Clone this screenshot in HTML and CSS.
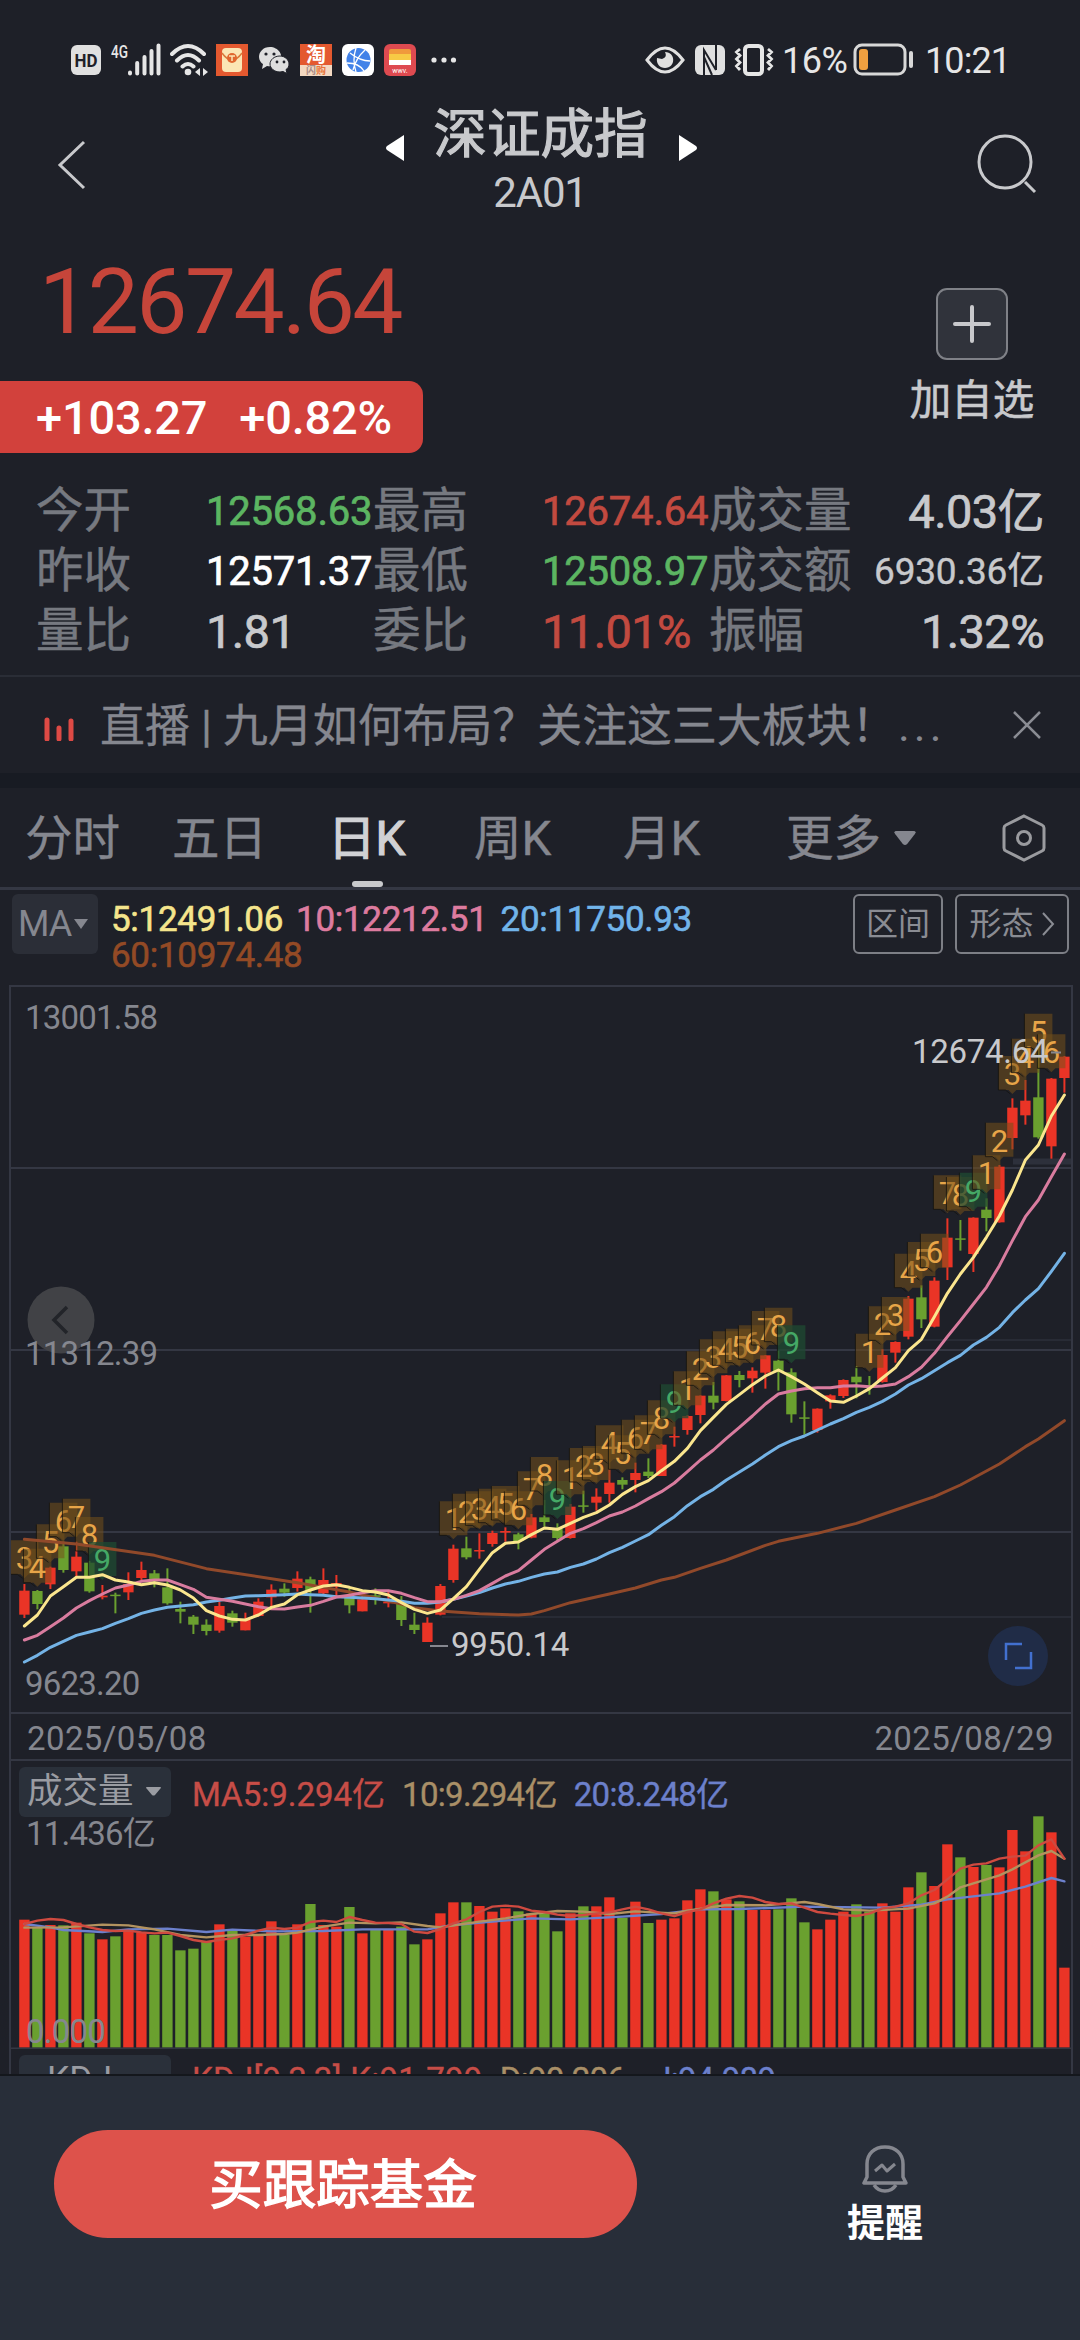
FILE: index.html
```html
<!DOCTYPE html>
<html lang="zh-CN">
<head>
  <meta charset="UTF-8" />
  <meta name="viewport" content="width=device-width, initial-scale=1" />
  <title>深证成指 2A01</title>
  <link rel="stylesheet" href="styles.css">
</head>
<body>
  <div class="page">
    <div class="status">
      <svg class="ic-hd" width="30" height="32" viewBox="0 0 30 32"><rect y="1" width="30" height="30" rx="6" fill="#e0e0e0"/><text x="15" y="23" textLength="23" lengthAdjust="spacingAndGlyphs" text-anchor="middle" font-size="19" font-weight="700" fill="#1e2028">HD</text></svg>
      <svg class="ic-signal" width="50" height="34" viewBox="0 0 50 34"><text x="0" y="15" textLength="17" lengthAdjust="spacingAndGlyphs" font-size="19" font-weight="500" fill="#e6e6e6">4G</text><path d="M19 29.500v1M26.200 20v10.500M33.500 14v16.500M40.500 8v22.500M47.500 2.500v28" stroke="#e6e6e6" stroke-width="4" stroke-linecap="round"/></svg>
      <svg class="ic-wifi" width="40" height="34" viewBox="0 0 40 34"><g fill="none" stroke="#e6e6e6" stroke-width="4" stroke-linecap="round"><path d="M2 11q16-16 32 0M7 17.500q11-11 22 0M12.500 23.500q5.500-5 11 0"/></g><circle cx="18" cy="29" r="3.300" fill="#e6e6e6"/><path d="M30 25v8l-5-4zM33 25v8l5-4z" fill="#e6e6e6"/></svg>
      <svg class="ic-app" width="32" height="32" viewBox="0 0 32 32"><rect width="32" height="32" fill="#e4592f"/><rect x="6" y="4" width="20" height="24" rx="4" fill="#fbe6b4"/><path d="M6 9q10 14 20 0" fill="none" stroke="#d9793a" stroke-width="1.500"/><circle cx="16" cy="14" r="5" fill="#e0672f"/><path d="M13 12h6M16 12v5" stroke="#fbe6b4" stroke-width="1.500"/></svg>
      <svg class="ic-wechat" width="32" height="32" viewBox="0 0 32 32"><path d="M12 3C5 3 1 8 1 13c0 3 2 6 4 7l-1 5 5-3q7 1 12-3c6-8-1-16-9-16z" fill="#dedede"/><path d="M22 12c-6 0-10 4-10 8s4 8 10 8l3-.500 4 2-1-4c2-1 3-3 3-5.500 0-4-4-8-9-8z" fill="#dedede" stroke="#1e2028"/><circle cx="8" cy="10" r="1.600" fill="#1e2028"/><circle cx="16" cy="10" r="1.600" fill="#1e2028"/><circle cx="19" cy="18" r="1.400" fill="#1e2028"/><circle cx="26" cy="18" r="1.400" fill="#1e2028"/></svg>
      <svg class="ic-app" width="32" height="32" viewBox="0 0 32 32"><rect width="32" height="32" fill="#e4592f"/><rect y="21" width="32" height="11" fill="#f3d9c2"/><text x="16" y="18" text-anchor="middle" font-size="20" font-weight="700" fill="#fff">淘</text><text x="16" y="30" text-anchor="middle" font-size="10" font-weight="700" fill="#a98a86">闪<tspan fill="#e8763c">购</tspan></text></svg>
      <svg class="ic-app" width="32" height="32" viewBox="0 0 32 32"><rect width="32" height="32" rx="6" fill="#fff"/><circle cx="16.500" cy="16" r="12" fill="#4282e8"/><path d="M8 9q10 8 20 8M14 4q-4 12 0 24M23 6q-9 8-12 20M5 19q12 0 17 8" fill="none" stroke="#fff" stroke-width="1.300"/></svg>
      <svg class="ic-app" width="32" height="32" viewBox="0 0 32 32"><rect width="32" height="32" rx="6" fill="#de4a50"/><rect x="5" y="5" width="22" height="8" rx="2" fill="#f09a3c"/><path d="M5 10h22v6H5z" fill="#f7ca45"/><path d="M5 16h22v5H5z" fill="#fff"/><text x="16" y="29" text-anchor="middle" font-size="7" fill="#fff">wwv.</text></svg>
      <svg class="ic-more" width="26" height="8" viewBox="0 0 26 8"><g fill="#e6e6e6"><circle cx="3" cy="4" r="2.600"/><circle cx="13" cy="4" r="2.600"/><circle cx="22.500" cy="4" r="2.600"/></g></svg>

      <svg class="ic-eye" width="40" height="28" viewBox="0 0 40 28"><path d="M2 14Q11 2 20 2t18 12Q29 26 20 26T2 14z" fill="none" stroke="#e0e0e0" stroke-width="3"/><path d="M20 6c2 4 0 6-3 7l-5-1c-1 6 3 10 8 10 11 0 11-16 0-16z" fill="#e0e0e0"/></svg>
      <svg class="ic-nfc" width="30" height="32" viewBox="0 0 30 32"><rect y="1" width="30" height="30" rx="6" fill="#e0e0e0"/><path d="M9 31V6l12 20M21 1v25M9 13l8 18" fill="none" stroke="#1e2028" stroke-width="2"/></svg>
      <svg class="ic-vib" width="40" height="32" viewBox="0 0 40 32"><g fill="none" stroke="#e6e6e6"><rect x="11" y="2" width="17" height="28" rx="3.500" stroke-width="4"/><path d="M6 5L2.500 8 6 11.500 2.500 15 6 18.500 2.500 22 6 26M34 5l3.500 3-3.500 3.500 3.500 3.500-3.500 3.500 3.500 3.500-3.500 4" stroke-width="2.800"/></g></svg>
      <span class="pct">16%</span>
      <svg class="ic-bat" width="61" height="34" viewBox="0 0 61 34"><rect x="2" y="2" width="50" height="29" rx="7" fill="none" stroke="#d8d8d8" stroke-width="3"/><rect x="6" y="6" width="9" height="21" rx="3" fill="#f0a040"/><rect x="56" y="8" width="4" height="17" rx="2" fill="#d8d8d8"/></svg>
      <span class="time">10:21</span>
    </div>

    <div class="header">
      <svg class="back" width="30" height="50" viewBox="0 0 30 50"><path d="M27 2L3 25l24 23" fill="none" stroke="#c8c9cc" stroke-width="3"/></svg>
      <div class="title">
        <div class="title-row">
          <svg width="18" height="26" viewBox="0 0 18 26"><path d="M18 0v26L1 15q-2-2 0-4z" fill="#fff"/></svg>
          <h1>深证成指</h1>
          <svg width="18" height="26" viewBox="0 0 18 26"><path d="M0 0v26l17-11q2-2 0-4z" fill="#fff"/></svg>
        </div>
        <div class="code">2A01</div>
      </div>
      <svg class="search" width="62" height="62" viewBox="0 0 62 62"><circle cx="28" cy="28" r="26" fill="none" stroke="#c8c9cc" stroke-width="3"/><path d="M48 48l10 10" stroke="#c8c9cc" stroke-width="3"/></svg>
    </div>

    <div class="quote">
      <div class="quote-left">
        <div class="price">12674.64</div>
        <div class="change"><span>+103.27</span><span>+0.82%</span></div>
      </div>
      <div class="add">
        <div class="add-box"><svg width="38" height="38" viewBox="0 0 38 38"><path d="M19 2v34M2 19h34" stroke="#c8c9cc" stroke-width="4" stroke-linecap="round"/></svg></div>
        <div class="add-text">加自选</div>
      </div>
    </div>

    <div class="stats">
      <span class="label">今开</span><span class="val green">12568.63</span>
      <span class="label">最高</span><span class="val red">12674.64</span>
      <span class="label">成交量</span><span class="val big end">4.03亿</span>
      <span class="label">昨收</span><span class="val white">12571.37</span>
      <span class="label">最低</span><span class="val green">12508.97</span>
      <span class="label">成交额</span><span class="val small end">6930.36亿</span>
      <span class="label">量比</span><span class="val big">1.81</span>
      <span class="label">委比</span><span class="val big red">11.01%</span>
      <span class="label">振幅</span><span class="val big end">1.32%</span>
    </div>

    <div class="news">
      <svg class="live" width="32" height="24" viewBox="0 0 32 24"><path d="M3 3v19M15 11v11M27 4v18" stroke="#de4a45" stroke-width="5" stroke-linecap="round"/></svg>
      <span class="news-text">直播 | 九月如何布局？关注这三大板块！</span>
      <span class="news-dots">...</span>
      <svg class="close" width="30" height="30" viewBox="0 0 30 30"><path d="M2 2l26 26M28 2L2 28" stroke="#8a8c93" stroke-width="2.500"/></svg>
    </div>

    <div class="tabs">
      <span class="tab t1">分时</span>
      <span class="tab t2">五日</span>
      <span class="tab t3 active">日K</span>
      <span class="tab t4">周K</span>
      <span class="tab t5">月K</span>
      <span class="tab t6">更多</span>
      <svg class="caret" width="22" height="14" viewBox="0 0 20 13"><path d="M2 0h16q3 0 1 3l-7 9q-2 2-4 0L1 3Q-1 0 2 0z" fill="#85878f"/></svg>
      <svg class="setting" width="44" height="48" viewBox="0 0 44 48"><g fill="none" stroke="#9a9b9f" stroke-width="3"><path d="M22 2l18 9q2 1 2 3v20q0 2-2 3l-18 9-18-9q-2-1-2-3V14q0-2 2-3z"/><circle cx="22" cy="24" r="6.500"/></g></svg>
    </div>

    <div class="ma">
      <div class="ma-chip">MA<svg width="14" height="10" viewBox="0 0 14 10"><path d="M0 0h14L7 10z" fill="#85878f"/></svg></div>
      <div class="ma-list">
        <div class="ma-row"><span class="ma5">5:12491.06</span><span class="ma10">10:12212.51</span><span class="ma20">20:11750.93</span></div>
        <div class="ma-row"><span class="ma60">60:10974.48</span></div>
      </div>
      <div class="ma-btn range">区间</div>
      <div class="ma-btn form">形态<svg width="14" height="24" viewBox="0 0 14 24"><path d="M2 1l10 11L2 23" fill="none" stroke="#8a8c93" stroke-width="2"/></svg></div>
    </div>

    <div class="charts">
      <svg id="kline" width="1060" height="776" viewBox="10 985 1060 776"></svg>
      <div class="vol-head">
        <div class="chip">成交量<svg width="15" height="9" viewBox="0 0 15 9"><path d="M1 0h13q2 0 0 2L9 8q-1.500 1-3 0L1 2Q-1 0 1 0z" fill="#9a9ca2"/></svg></div>
        <span class="v5">MA5:9.294亿</span><span class="v10">10:9.294亿</span><span class="v20">20:8.248亿</span>
      </div>
      <svg id="volume" width="1060" height="233" viewBox="10 1816 1060 233"></svg>
      <div class="vol-head kdj">
        <div class="chip">KDJ<svg width="15" height="9" viewBox="0 0 15 9"><path d="M1 0h13q2 0 0 2L9 8q-1.500 1-3 0L1 2Q-1 0 1 0z" fill="#9a9ca2"/></svg></div>
        <span class="v5">KDJ[9,3,3] K:91.799</span><span class="v10">D:90.206</span><span class="v20">J:94.989</span>
      </div>
    </div>

    <div class="bottom">
      <div class="buy">买跟踪基金</div>
      <div class="remind">
        <svg width="46" height="48" viewBox="0 0 46 48"><g fill="none" stroke="#85878f" stroke-width="3.500" stroke-linejoin="round"><path d="M23 2C12 2 5 9 5 19v13l-3 6h42l-3-6V19C41 9 34 2 23 2z"/><path d="M12 40q4 6 11 6t11-6"/><path d="M13 26l7-6 5 6 8-7" stroke-width="3"/></g></svg>
        <div>提醒</div>
      </div>
    </div>
  </div>

  <script src="chart.js"></script>
</body>
</html>
```
FILE: styles.css
```css
body {
  margin: 0;
  background: #1e2028;
  font-family: Roboto, 'Noto Sans CJK SC', sans-serif;
  color: #c8c9cc;
}

.page {
  width: 1080px;
  height: 2340px;
  overflow: hidden;
  display: flex;
  flex-direction: column;
}

svg {
  display: block;
  flex: none;
}

.status {
  height: 100px;
  box-sizing: border-box;
  padding: 20px 0 0 71px;
  display: flex;
  align-items: center;
  color: #e6e6e6;
  font-size: 36px;
  flex: none;
}

.status span {
  padding-top: 2px;
}

.ic-signal {
  margin-left: 10px;
}

.ic-wifi {
  margin-left: 9px;
}

.ic-app {
  margin-left: 10px;
}

.ic-wifi + .ic-app {
  margin-left: 6px;
}

.ic-wechat {
  margin-left: 10px;
}

.ic-more {
  margin-left: 15px;
}

.ic-eye {
  margin-left: 188px;
}

.ic-nfc {
  margin-left: 10px;
}

.ic-vib {
  margin-left: 9px;
}

.pct {
  width: 64px;
  margin-left: 8px;
  letter-spacing: -0.5px;
}

.ic-bat {
  margin-left: 7px;
}

.time {
  margin-left: 11px;
  letter-spacing: -0.9px;
}

.header {
  height: 140px;
  display: flex;
  flex: none;
}

.back {
  margin: 40px 0 0 57px;
}

.title {
  flex: 1;
  margin-left: 18px;
}

.title-row {
  display: flex;
  justify-content: center;
  align-items: center;
  height: 66px;
}

.title-row svg {
  margin-top: 30px;
}

.title h1 {
  margin: 3px 31px 0 30px;
  font-size: 53.5px;
  line-height: 64px;
  font-weight: 400;
  -webkit-text-stroke: 1.2px;
}

.code {
  text-align: center;
  font-size: 42px;
  line-height: 54px;
  letter-spacing: -1.2px;
  margin-right: 2px;
}

.search {
  margin: 34px 41px 0 0;
}

.quote {
  height: 240px;
  display: flex;
  justify-content: space-between;
  flex: none;
}

.price {
  margin: 2px 0 0 39px;
  height: 120px;
  line-height: 120px;
  font-size: 91px;
  letter-spacing: -2.5px;
  color: #c6453a;
}

.change {
  margin-top: 19px;
  width: 423px;
  height: 72px;
  line-height: 73px;
  box-sizing: border-box;
  padding-left: 36px;
  display: flex;
  gap: 32px;
  background: #d2413c;
  border-radius: 0 14px 14px 0;
  color: #fff;
  font-size: 47px;
  font-weight: 500;
  letter-spacing: -0.2px;
}

.add {
  width: 130px;
  margin: 48px 43px 0 0;
  display: flex;
  flex-direction: column;
  align-items: center;
}

.add-box {
  width: 72px;
  height: 72px;
  flex: none;
  box-sizing: border-box;
  border: 2px solid #7f8187;
  border-radius: 11px;
  background: #30333b;
  display: flex;
  align-items: center;
  justify-content: center;
}

.add-text {
  margin-top: 13px;
  font-size: 41.5px;
  line-height: 56px;
  white-space: nowrap;
  -webkit-text-stroke: 0.6px;
}

.stats {
  display: grid;
  grid-template-columns: 170px 167px 169px 167px 155px 1fr;
  grid-template-rows: 60px 60px 60px;
  padding: 1px 36px 14px 36px;
  flex: none;
}

.stats span {
  line-height: 61px;
  white-space: nowrap;
}

.label {
  color: #767980;
  font-size: 47.5px;
  -webkit-text-stroke: 0.5px;
}

.val {
  font-size: 40px;
  letter-spacing: -0.2px;
  -webkit-text-stroke: 0.7px;
}

.big {
  font-size: 47px;
  letter-spacing: -0.6px;
}

.small {
  font-size: 37px;
  -webkit-text-stroke: 0.4px;
}

.end {
  text-align: right;
}

.green {
  color: #5cb562;
}

.red {
  color: #c24a40;
}

.white {
  color: #fff;
}

.news {
  height: 96px;
  border-top: 2px solid #2a2d36;
  border-bottom: 15px solid #181b23;
  display: flex;
  align-items: center;
  color: #85878f;
  font-size: 44.9px;
  flex: none;
}

.live {
  margin: 8px 24px 0 44px;
}

.news-text {
  width: 798px;
  line-height: 96px;
  padding-top: 3px;
  white-space: nowrap;
  overflow: hidden;
  -webkit-text-stroke: 0.3px;
}

.news-dots {
  width: 103px;
  letter-spacing: 4px;
}

.close {
  margin-left: 11px;
}

.tabs {
  height: 99px;
  border-bottom: 3px solid #343743;
  display: flex;
  align-items: center;
  padding-left: 25px;
  color: #85878f;
  font-size: 47.5px;
  flex: none;
}

.tab {
  position: relative;
  height: 99px;
  line-height: 102px;
  -webkit-text-stroke: 0.4px;
}

.t1, .t2, .t3, .t4, .t5 {
  width: 147px;
}

.t2 {
  width: 156px;
}

.t3 {
  width: 146px;
}

.t4 {
  width: 149px;
}

.t5 {
  width: 163px;
}

.t6 {
  width: 108px;
}

.active {
  color: #d0d1d4;
  -webkit-text-stroke: 1.2px;
}

.active::after {
  content: '';
  position: absolute;
  left: 24px;
  bottom: 0;
  width: 31px;
  height: 6px;
  border-radius: 3px;
  background: #c8c9cc;
}

.setting {
  margin-left: 86px;
}

.ma {
  height: 95px;
  display: flex;
  align-items: flex-start;
  flex: none;
}

.ma-chip {
  width: 86px;
  height: 60px;
  line-height: 63px;
  margin: 4px 0 0 12px;
  box-sizing: border-box;
  padding-left: 6px;
  background: #2b2e37;
  border-radius: 6px;
  display: flex;
  align-items: center;
  gap: 3px;
  color: #85878f;
  font-size: 36px;
  letter-spacing: -1px;
}

.ma-list {
  width: 741px;
  margin: 12px 0 0 13px;
  font-size: 35px;
  letter-spacing: -0.3px;
  -webkit-text-stroke: 0.6px;
}

.ma-row {
  display: flex;
  gap: 13px;
  line-height: 36px;
}

.ma5 {
  color: #f5e58c;
}

.ma10 {
  color: #dd7b9f;
}

.ma20 {
  color: #71b4ea;
}

.ma60 {
  color: #934a25;
}

.ma-btn {
  height: 60px;
  line-height: 58px;
  margin: 4px 0 0 1px;
  box-sizing: border-box;
  border: 2px solid #7d7f86;
  border-radius: 6px;
  color: #8a8c93;
  font-size: 32px;
  display: flex;
  align-items: center;
  justify-content: center;
}

.range {
  width: 90px;
}

.form {
  width: 114px;
  margin-left: 12px;
  gap: 7px;
}

.charts {
  width: 1060px;
  height: 1089px;
  margin-left: 9px;
  border: solid #343743;
  border-width: 0 2px;
  overflow: hidden;
  flex: none;
}

.charts text {
  font-size: 33px;
  fill: #85878f;
  letter-spacing: -0.8px;
}

.charts .mark {
  font-size: 31px;
  fill: #e8a548;
  text-anchor: middle;
  letter-spacing: 0;
}

.charts .mark9 {
  fill: #45a866;
}

.charts .bright {
  fill: #c8c9cc;
  letter-spacing: -0.3px;
}

.charts .date {
  letter-spacing: 0.4px;
}

.vol-head {
  height: 55px;
  display: flex;
  align-items: center;
  font-size: 33px;
  box-sizing: border-box;
  padding-top: 6px;
  white-space: nowrap;
}

.vol-head span {
  -webkit-text-stroke: 0.4px;
}

.chip {
  width: 152px;
  height: 50px;
  line-height: 55px;
  box-sizing: border-box;
  margin-left: 8px;
  padding-left: 8px;
  display: flex;
  align-items: center;
  gap: 12px;
  background: #2a303a;
  border-radius: 6px;
  color: #9a9ca2;
  font-size: 35.5px;
}

.v5 {
  color: #c74d47;
  margin-left: 21px;
}

.v10 {
  color: #a98f67;
  margin-left: 17px;
  letter-spacing: -0.7px;
}

.v20 {
  color: #6c80cc;
  margin-left: 17px;
  letter-spacing: -0.7px;
}

.kdj .chip {
  padding-left: 28px;
  gap: 24px;
}

.kdj .v5 {
  letter-spacing: 0.3px;
}

.kdj .v20 {
  margin-left: 28px;
}

.bottom {
  height: 265px;
  border-top: 2px solid #14171c;
  background: #282e39;
  display: flex;
  align-items: flex-start;
}

.buy {
  width: 583px;
  height: 108px;
  line-height: 111px;
  margin: 54px 0 0 54px;
  box-sizing: border-box;
  padding-right: 5px;
  border-radius: 54px;
  background: #dd524b;
  color: #fff;
  font-size: 53.5px;
  text-align: center;
  -webkit-text-stroke: 1.4px;
}

.remind {
  width: 100px;
  margin: 69px 0 0 198px;
  display: flex;
  flex-direction: column;
  align-items: center;
  color: #fff;
  font-size: 38px;
  line-height: 52px;
  font-weight: 700;
}

.remind div {
  margin-top: 4px;
}
```
FILE: chart.js
```js
// [up, high, body top, body bottom, low], y in thirds of a pixel
const candles = [
  [1,1032,1052,1124,1134],[0,1050,1053,1092,1108],[1,980,983,1033,1047],[0,905,919,990,998],[1,905,950,994,1012],
  [0,963,968,1054,1058],[1,1035,1067,1072,1078],[0,1058,1064,1067,1120],[1,997,1032,1057,1080],[1,965,990,1014,1022],
  [0,990,1000,1018,1042],[0,985,1042,1090,1094],[0,1085,1107,1115,1150],[0,1125,1130,1154,1182],[0,1138,1154,1173,1186],
  [1,1085,1098,1172,1178],[0,1112,1120,1148,1160],[1,1118,1140,1171,1171],[1,1075,1085,1128,1130],[1,1033,1049,1072,1105],
  [0,1030,1046,1058,1070],[1,994,1016,1044,1055],[0,1010,1018,1050,1118],[1,985,1020,1060,1062],[1,1005,1029,1040,1070],
  [0,1045,1070,1096,1120],[1,1065,1078,1114,1114],[0,1045,1066,1070,1094],[1,1050,1085,1090,1102],[0,1068,1090,1140,1158],
  [0,1118,1154,1170,1182],[1,1132,1148,1206,1206],[1,1032,1038,1124,1126],[1,914,926,1020,1028],[0,890,925,952,958],
  [1,880,930,934,956],[1,872,879,912,920],[1,862,873,878,905],[0,878,883,903,928],[1,822,832,893,895],
  [0,780,832,846,860],[0,850,866,894,904],[1,792,800,894,896],[0,752,796,799,818],[1,745,770,788,812],
  [1,687,728,762,788],[0,712,720,734,748],[1,668,699,720,757],[0,655,695,708,714],[1,612,614,708,708],
  [1,560,588,591,620],[1,525,528,570,584],[1,466,467,525,550],[0,426,467,488,508],[1,405,406,483,484],
  [0,393,405,420,442],[1,382,392,415,458],[1,345,346,398,446],[0,332,362,394,452],[0,385,397,523,548],
  [0,484,532,536,584],[1,505,506,570,578],[1,463,466,484,506],[1,418,420,468,474],[0,378,410,427,475],
  [0,408,436,440,464],[1,328,345,426,428],[1,304,306,338,368],[1,168,176,290,298],[0,136,172,238,264],
  [1,112,122,260,262],[1,-65,-7,82,120],[0,-60,-5,-2,32],[1,-68,-67,42,96],[0,-125,-91,-66,-26],
  [1,-225,-220,-53,-52],[1,-425,-397,-306,-272],[1,-480,-418,-374,-346],[0,-580,-428,-308,-304],[1,-486,-484,-281,-244],
  [1,-552,-550,-486,-442]
];

const ma5 = [1158,1125,1068,1040,1012,1012,1004,1020,1026,1034,1028,1035,1050,1074,1112,1128,1138,1140,1125,1102,1092,1064,1050,1038,1034,1042,1052,1056,1065,1088,1108,1120,1110,1076,1040,988,938,910,906,884,864,868,850,832,818,795,763,740,722,692,664,625,572,532,493,464,434,408,390,410,432,458,483,487,468,446,414,383,332,298,230,160,102,52,-8,-72,-150,-240,-285,-372,-435];
const ma10 = [1200,1186,1160,1134,1104,1082,1062,1044,1035,1024,1020,1020,1034,1048,1072,1078,1084,1092,1100,1106,1107,1101,1096,1084,1071,1066,1058,1052,1052,1060,1073,1085,1085,1078,1066,1052,1030,1008,992,960,928,904,880,866,848,828,816,798,776,755,729,695,660,630,595,562,528,492,462,453,446,443,443,438,437,440,438,432,410,382,340,290,242,192,142,77,2,-70,-120,-190,-258];
const ma20 = [1266,1246,1222,1204,1186,1176,1166,1150,1136,1120,1110,1102,1098,1094,1086,1081,1074,1068,1067,1066,1064,1062,1064,1066,1070,1072,1074,1076,1080,1084,1090,1090,1086,1078,1068,1058,1044,1032,1024,1012,1002,996,982,972,957,938,922,903,884,856,830,797,770,748,720,696,672,645,620,602,588,570,552,536,517,502,484,462,435,416,392,368,346,315,292,262,218,180,146,94,40];
const ma60 = [[0,898],[4,912],[10,946],[14,986],[21,1028],[25,1056],[29,1092],[30,1103],[32,1113],[35,1121],[38,1125],[39,1122],[40,1112],[42,1088],[45,1062],[47,1044],[49,1020],[50,1012],[52,985],[54,960],[57,916],[58,904],[61,880],[64,850],[67,810],[70,770],[72,735],[75,672],[77,620],[78,597],[80,542]];

// [candle index, number, y]
const marks = [
  [0,3,955],[1,4,980],[2,5,907],[3,6,842],[4,7,830],[5,8,885],[6,9,960],
  [33,1,838],[34,2,815],[35,3,808],[36,4,800],[37,5,792],[38,6,808],[39,7,748],[40,8,705],[41,9,777],
  [42,1,715],[43,2,678],[44,3,672],[45,4,610],[46,5,640],[47,6,593],[48,7,580],[49,8,535],[50,9,487],
  [51,1,448],[52,2,388],[53,3,352],[54,4,328],[55,5,320],[56,6,310],[57,7,267],[58,8,257],[59,9,310],
  [65,1,335],[66,2,253],[67,3,225],[68,4,95],[69,5,60],[70,6,35],[71,7,-140],[72,8,-135],[73,9,-148],
  [74,1,-200],[75,2,-298],[76,3,-498],[77,4,-550],[78,5,-625],[79,6,-563]
];

const vols = [539,563,555,556,548,580,598,589,567,578,585,585,631,626,605,553,573,590,587,544,584,553,492,555,560,501,580,570,570,560,613,598,520,487,487,498,515,505,514,520,520,574,520,499,499,472,533,485,549,539,535,481,448,454,478,484,510,510,508,475,547,568,539,515,493,515,490,515,442,397,438,313,352,381,375,382,270,334,229,277,683];
const vol5 = [552,542,537,540,552,562,570,573,572,577,580,578,588,600,606,600,595,585,572,563,567,563,546,542,546,531,540,548,549,552,575,579,567,550,538,516,500,497,500,512,516,524,528,525,520,517,508,500,508,520,528,516,508,490,476,468,473,486,492,490,503,516,521,525,528,521,505,500,490,466,450,418,386,374,370,356,350,347,316,298,356];
const vol10 = [[0,563],[3,562],[6,554],[8,556],[10,568],[12,585],[14,592],[16,585],[18,585],[20,582],[21,578],[23,560],[25,548],[27,550],[29,547],[31,558],[32,562],[35,545],[37,535],[39,522],[41,513],[43,515],[45,522],[47,514],[50,520],[51,512],[54,495],[57,496],[60,486],[61,492],[63,508],[65,512],[68,506],[70,490],[71,470],[72,442],[73,430],[75,406],[76,388],[78,346],[79,333],[80,356]];
const vol20 = [[0,552],[2,562],[3,570],[6,576],[8,568],[11,566],[14,576],[16,569],[19,574],[23,573],[26,568],[31,568],[33,555],[36,545],[39,535],[42,538],[46,530],[49,522],[52,508],[55,507],[60,500],[66,503],[69,494],[71,478],[75,460],[77,440],[79,414],[80,424]];

const RED = '#ea3426';
const GREEN = '#6aa02f';
const x = i => 23.4 + 13 * i;
const ky = v => 1240 + v / 3;
const vy = v => 1740 + v / 3;

function line(data, y, color, width) {
  const pts = data.map((p, i) => Array.isArray(p) ? x(p[0]) + ',' + y(p[1]) : x(i) + ',' + y(p));
  return `<polyline points="${pts.join(' ')}" fill="none" stroke="${color}" stroke-width="${width}" stroke-linejoin="round" stroke-linecap="round"/>`;
}

function rule(x1, y, x2, color, width) {
  return `<path d="M${x1} ${y}H${x2}" stroke="${color}" stroke-width="${width}"/>`;
}

function drawKline() {
  let s = '';
  [986, 1168, 1350, 1532, 1713, 1760].forEach(y => s += rule(10, y, 1070, '#343743', 2));
  s += rule(922, 1340, 1070, '#282b35', 2) + rule(441, 1617, 1070, '#282b35', 2) + rule(1012, 1161.5, 1070, '#2d303b', 6);

  candles.forEach(([up, hi, top, bot, lo], i) => {
    const c = up ? RED : GREEN;
    s += `<path d="M${x(i)} ${ky(hi)}V${ky(lo)}" stroke="${c}" stroke-width="2"/>`;
    s += `<rect x="${x(i) - 5.2}" y="${ky(top)}" width="10.400" height="${Math.max((bot - top) / 3, 1.5)}" fill="${c}"/>`;
  });

  marks.forEach(([i, n, v]) => {
    const cx = x(i), cy = ky(v) - 1;
    const nine = n === 9;
    const fill = nine ? '#1f4a32' : '#74501a';
    s += `<path d="M${cx - 14} ${cy - 17}h28v34h-10l-4 4-4-4h-10z" fill="${fill}" fill-opacity="${nine ? 0.75 : 0.55}"/>`;
    s += `<path d="M${cx - 14} ${cy - 17}v34h7l5 4" fill="none" stroke="#14130f" stroke-width="1" opacity=".8"/>`;
    s += `<text class="mark${nine ? ' mark9' : ''}" x="${cx}" y="${cy + 12}">${n}</text>`;
  });

  s += line(ma60, ky, '#91492a', 3) + line(ma20, ky, '#74b3e6', 3) + line(ma10, ky, '#d97c9f', 3) + line(ma5, ky, '#fbe68e', 3);

  s += '<circle cx="60" cy="1320" r="33.500" fill="#414246"/><path d="M66 1307l-13 13 13 13" fill="none" stroke="#222429" stroke-width="3.500"/>';
  s += '<text x="24" y="1029">13001.58</text><text x="24" y="1365">11312.39</text><text x="24" y="1695">9623.20</text>';
  s += '<text class="date" x="26" y="1750">2025/05/08</text><text class="date" x="1053" y="1750" text-anchor="end">2025/08/29</text>';
  s += rule(429, 1646, 447, '#85878f', 2) + '<text class="bright" x="450" y="1656">9950.14</text>';
  s += rule(1050, 1052.5, 1060, '#85878f', 2) + '<text class="bright" x="911" y="1063">12674.64</text>';
  s += '<circle cx="1017" cy="1656" r="30" fill="#202c47"/><path d="M1005 1660v-16h16M1014 1668h16v-16" fill="none" stroke="#4270cf" stroke-width="2.500"/>';
  document.getElementById('kline').innerHTML = s;
}

function drawVolume() {
  let s = '';
  vols.forEach((v, i) => {
    s += `<rect x="${x(i) - 5.2}" y="${vy(v)}" width="10.400" height="${(923 - v) / 3}" fill="${candles[i][0] ? RED : GREEN}"/>`;
  });
  s += line(vol20, vy, '#6c80cc', 2.4) + line(vol10, vy, '#b3935f', 2.4) + line(vol5, vy, '#cf4a40', 2.4);
  s += rule(10, 2048.5, 1070, '#343743', 2);
  s += '<text x="25" y="1845">11.436亿</text><text x="25" y="2043">0.000</text>';
  document.getElementById('volume').innerHTML = s;
}

drawKline();
drawVolume();
```
